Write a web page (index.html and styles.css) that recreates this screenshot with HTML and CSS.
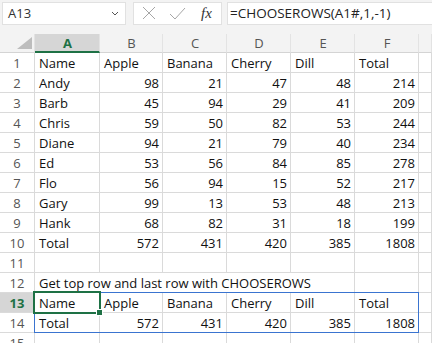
FILE: index.html
```html
<html lang="en">
  <head>
    <meta charset="UTF-8" />
    <title>CHOOSEROWS</title>
    <link rel="stylesheet" href="styles.css">
  </head>
  <body>
    <div class="topbar">
      <div class="namebox">
        <span>A13</span>
        <svg class="caret" width="8" height="5" viewBox="0 0 8 5"><path d="M1 1 L4 4 L7 1" fill="none" stroke="#555" stroke-width="1"/></svg>
      </div>
      <div class="fxbox">
        <svg width="14" height="14" viewBox="0 0 14 14"><path d="M1 1 L13 13 M13 1 L1 13" stroke="#a6a6a6" stroke-width="1" fill="none"/></svg>
        <svg width="17" height="13" viewBox="0 0 17 13"><path d="M1 7 L6 12 L16 1" stroke="#a6a6a6" stroke-width="1" fill="none"/></svg>
        <span class="fx">fx</span>
      </div>
      <div class="formula">=CHOOSEROWS(A1#,1,-1)</div>
    </div>

    <div class="sheet">
      <div class="c hd corner"><svg width="35" height="19" viewBox="0 0 35 19"><polygon points="32,3 32,15 17,15" fill="#bdbdbd"/></svg></div>
      <div class="c hd sel-col">A</div>
      <div class="c hd">B</div>
      <div class="c hd">C</div>
      <div class="c hd">D</div>
      <div class="c hd">E</div>
      <div class="c hd">F</div>
      <div class="c hd"></div>

      <div class="c rh">1</div><div class="c">Name</div><div class="c">Apple</div><div class="c">Banana</div><div class="c">Cherry</div><div class="c">Dill</div><div class="c">Total</div><div class="c"></div>
      <div class="c rh">2</div><div class="c">Andy</div><div class="c n">98</div><div class="c n">21</div><div class="c n">47</div><div class="c n">48</div><div class="c n">214</div><div class="c"></div>
      <div class="c rh">3</div><div class="c">Barb</div><div class="c n">45</div><div class="c n">94</div><div class="c n">29</div><div class="c n">41</div><div class="c n">209</div><div class="c"></div>
      <div class="c rh">4</div><div class="c">Chris</div><div class="c n">59</div><div class="c n">50</div><div class="c n">82</div><div class="c n">53</div><div class="c n">244</div><div class="c"></div>
      <div class="c rh">5</div><div class="c">Diane</div><div class="c n">94</div><div class="c n">21</div><div class="c n">79</div><div class="c n">40</div><div class="c n">234</div><div class="c"></div>
      <div class="c rh">6</div><div class="c">Ed</div><div class="c n">53</div><div class="c n">56</div><div class="c n">84</div><div class="c n">85</div><div class="c n">278</div><div class="c"></div>
      <div class="c rh">7</div><div class="c">Flo</div><div class="c n">56</div><div class="c n">94</div><div class="c n">15</div><div class="c n">52</div><div class="c n">217</div><div class="c"></div>
      <div class="c rh">8</div><div class="c">Gary</div><div class="c n">99</div><div class="c n">13</div><div class="c n">53</div><div class="c n">48</div><div class="c n">213</div><div class="c"></div>
      <div class="c rh">9</div><div class="c">Hank</div><div class="c n">68</div><div class="c n">82</div><div class="c n">31</div><div class="c n">18</div><div class="c n">199</div><div class="c"></div>
      <div class="c rh">10</div><div class="c">Total</div><div class="c n">572</div><div class="c n">431</div><div class="c n">420</div><div class="c n">385</div><div class="c n">1808</div><div class="c"></div>
      <div class="c rh">11</div><div class="c"></div><div class="c"></div><div class="c"></div><div class="c"></div><div class="c"></div><div class="c"></div><div class="c"></div>
      <div class="c rh">12</div><div class="c wide">Get top row and last row with CHOOSEROWS</div><div class="c"></div><div class="c"></div>
      <div class="c rh sel-row">13</div><div class="c">Name</div><div class="c">Apple</div><div class="c">Banana</div><div class="c">Cherry</div><div class="c">Dill</div><div class="c">Total</div><div class="c"></div>
      <div class="c rh">14</div><div class="c">Total</div><div class="c n">572</div><div class="c n">431</div><div class="c n">420</div><div class="c n">385</div><div class="c n">1808</div><div class="c"></div>
      <div class="c rh">15</div><div class="c"></div><div class="c"></div><div class="c"></div><div class="c"></div><div class="c"></div><div class="c"></div><div class="c"></div>

      <div class="spill"></div>
      <div class="active"><span class="handle"></span></div>
    </div>
  </body>
</html>
```

FILE: styles.css
```css
body {
  margin: 0;
  width: 432px;
  height: 343px;
  overflow: hidden;
  background: #fff;
  font-family: "Open Sans", "Noto Sans", sans-serif;
  font-size: 13px;
  color: #111;
}
.topbar {
  display: flex;
  align-items: center;
  height: 34px;
  padding-left: 2px;
  background: #f3f3f3;
  box-sizing: border-box;
}
.namebox,
.fxbox,
.formula {
  height: 23px;
  margin-top: -8px;
  background: #fff;
  border: 1px solid #e1e1e1;
  box-sizing: border-box;
  display: flex;
  align-items: center;
}
.namebox {
  width: 124px;
  padding: 0 6px 0 5px;
  justify-content: space-between;
  color: #333;
}
.fxbox {
  width: 89px;
  margin-left: 7px;
  padding-left: 8px;
  gap: 13px;
}
.fx {
  margin-left: 2px;
  font-family: "Liberation Serif", serif;
  font-style: italic;
  font-size: 15px;
  color: #333;
}
.formula {
  flex: 1;
  margin-left: 5px;
  padding-left: 2px;
  border-right: none;
  color: #222;
  font-size: 13.5px;
}
.sheet {
  position: relative;
  display: grid;
  grid-template-columns: 35px 65px 63px 64px 64px 64px 64px 1fr;
  grid-template-rows: 19px;
  grid-auto-rows: 20px;
}
.c {
  border-right: 1px solid #dadada;
  border-bottom: 1px solid #dadada;
  padding: 0 3px 0 4px;
  line-height: 20px;
  white-space: nowrap;
  box-sizing: border-box;
}
.n {
  text-align: right;
}
.hd {
  background: #f3f3f3;
  border-right-color: #e3e3e3;
  border-bottom-color: #d4d4d4;
  text-align: center;
  color: #555;
  line-height: 18px;
}
.corner {
  padding: 0;
  line-height: 0;
}
.sel-col {
  background: #d6d6d6;
  color: #1e7145;
  font-weight: bold;
  border-bottom: 2px solid #1e7145;
}
.rh {
  text-align: center;
  color: #555;
  padding: 0;
}
.sel-row {
  background: #d6d6d6;
  color: #1e7145;
  font-weight: bold;
}
.wide {
  grid-column: span 5;
}
.spill {
  position: absolute;
  left: 34px;
  top: 258px;
  width: 385px;
  height: 41px;
  border: 1px solid #3a74d0;
  box-sizing: border-box;
}
.active {
  position: absolute;
  left: 33px;
  top: 257px;
  width: 68px;
  height: 23px;
  border: 2px solid #1e7145;
  box-sizing: border-box;
}
.handle {
  position: absolute;
  right: -4px;
  bottom: -4px;
  width: 5px;
  height: 5px;
  background: #1e7145;
  border: 1px solid #fff;
}
```
